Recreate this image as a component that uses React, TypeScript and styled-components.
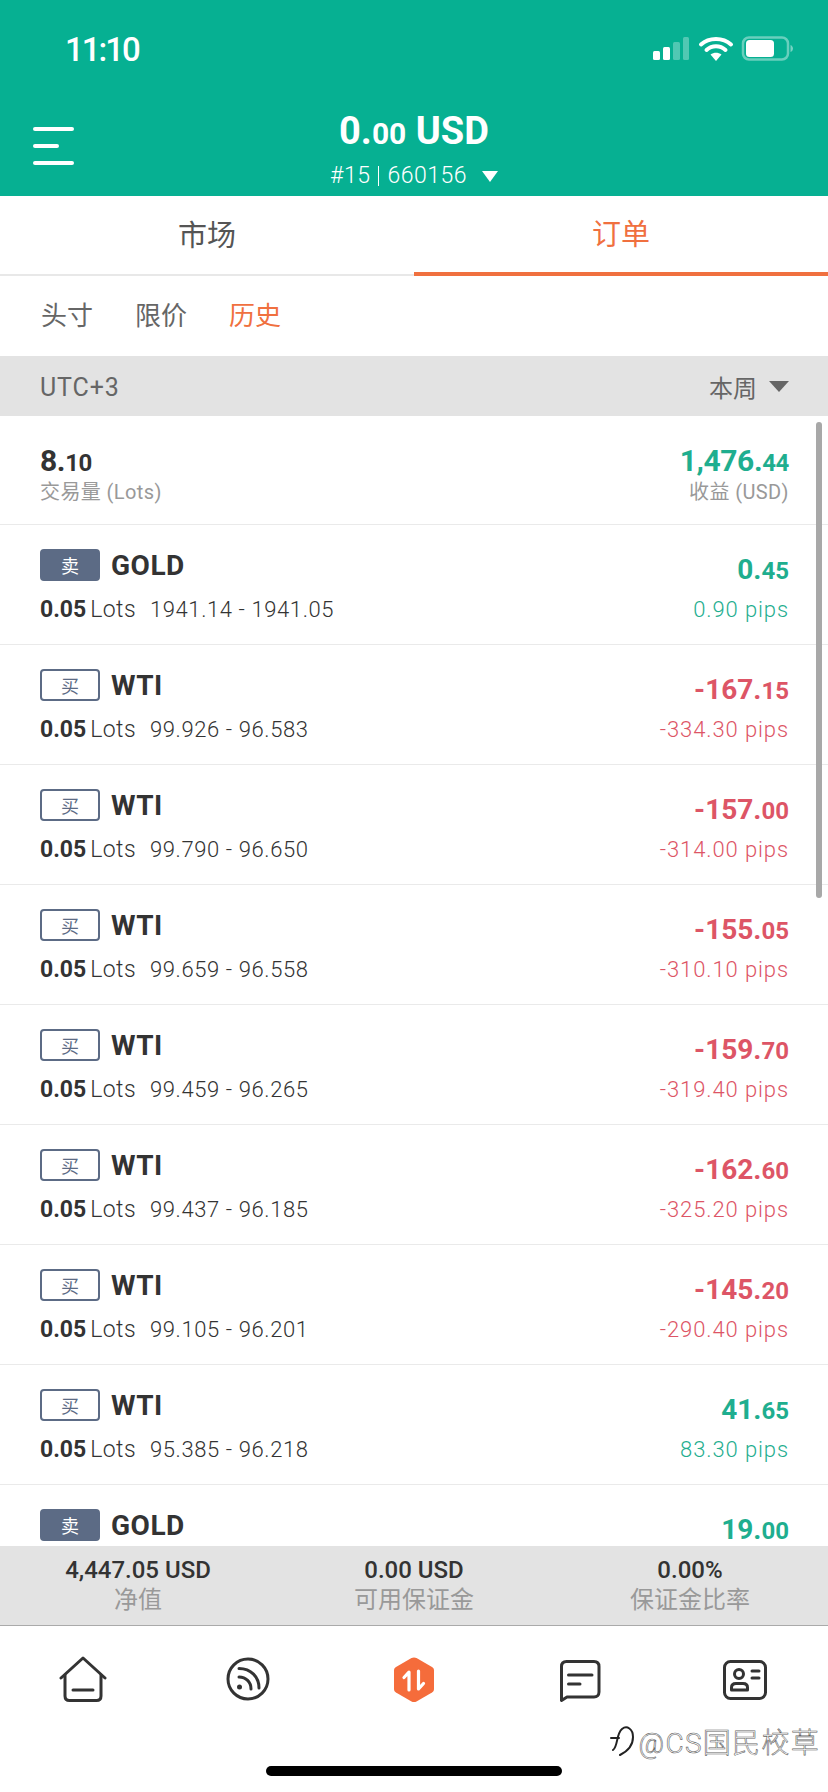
import React from 'react';
import styled, { createGlobalStyle } from 'styled-components';

const GlobalStyle = createGlobalStyle`
  html, body {
    margin: 0;
    padding: 0;
    background: #fff;
  }
  * {
    box-sizing: border-box;
  }
`;

const FONT = `Roboto, "Noto Sans CJK SC", sans-serif`;
const GREEN = '#1fae8f';
const RED = '#dd5566';
const ORANGE = '#f0703f';

type Order = {
  side: 'sell' | 'buy';
  symbol: string;
  range?: string;
  whole: string;
  cents: string;
  pips?: string;
};

// the last row is cut by the footer, only its top line shows
const ORDERS: Order[] = [
  { side: 'sell', symbol: 'GOLD', range: '1941.14 - 1941.05', whole: '0.', cents: '45', pips: '0.90 pips' },
  { side: 'buy', symbol: 'WTI', range: '99.926 - 96.583', whole: '-167.', cents: '15', pips: '-334.30 pips' },
  { side: 'buy', symbol: 'WTI', range: '99.790 - 96.650', whole: '-157.', cents: '00', pips: '-314.00 pips' },
  { side: 'buy', symbol: 'WTI', range: '99.659 - 96.558', whole: '-155.', cents: '05', pips: '-310.10 pips' },
  { side: 'buy', symbol: 'WTI', range: '99.459 - 96.265', whole: '-159.', cents: '70', pips: '-319.40 pips' },
  { side: 'buy', symbol: 'WTI', range: '99.437 - 96.185', whole: '-162.', cents: '60', pips: '-325.20 pips' },
  { side: 'buy', symbol: 'WTI', range: '99.105 - 96.201', whole: '-145.', cents: '20', pips: '-290.40 pips' },
  { side: 'buy', symbol: 'WTI', range: '95.385 - 96.218', whole: '41.', cents: '65', pips: '83.30 pips' },
  { side: 'sell', symbol: 'GOLD', whole: '19.', cents: '00' },
];

function StatusIcons() {
  return (
    <svg width="144" height="28" viewBox="0 0 144 28" fill="none">
      <rect x="4" y="16" width="7" height="9" rx="1.5" fill="#fff" />
      <rect x="14" y="12" width="7" height="13" rx="1.5" fill="#fff" />
      <rect x="24" y="7" width="7" height="18" rx="1.5" fill="#fff" opacity="0.3" />
      <rect x="34" y="2" width="6" height="23" rx="1.5" fill="#fff" opacity="0.3" />
      <path d="M52 9.5C60 2 74 2 82 9.5" stroke="#fff" strokeWidth="4" strokeLinecap="round" />
      <path d="M57.5 15C63 10 71 10 76.5 15" stroke="#fff" strokeWidth="4" strokeLinecap="round" />
      <path d="M61.5 19.5L67 26L72.5 19.5C69 17 65 17 61.5 19.5Z" fill="#fff" />
      <rect x="94" y="2.5" width="45" height="22" rx="6" stroke="#fff" strokeOpacity="0.4" strokeWidth="2.5" />
      <rect x="97" y="5" width="28" height="17" rx="3.5" fill="#fff" />
      <path d="M141.5 10C143 10.500 144 12 144 13.500C144 15 143 16.500 141.500 17Z" fill="#fff" fillOpacity="0.45" />
    </svg>
  );
}

function HomeIcon() {
  return (
    <NavSvg>
      <path d="M2 22L24 2L46 22" />
      <path d="M6 19V40C6 43 7.500 44.500 10.500 44.500H37.500C40.500 44.500 42 43 42 40V19" />
      <path d="M14 34H34" />
    </NavSvg>
  );
}

function FeedIcon() {
  return (
    <NavSvg>
      <circle cx="24" cy="23" r="20" />
      <path d="M15 21C22 21 27 26 27 33" />
      <path d="M15 12.500C27 12.500 35 21 35 32" />
      <circle cx="15.500" cy="31" r="2.500" fill="#333" stroke="none" />
    </NavSvg>
  );
}

function OrdersIcon() {
  return (
    <svg width="48" height="48" viewBox="0 0 48 48" fill="none">
      <path
        d="M21.500 2L6 11C4.500 12 4 13 4 14.500V33C4 34.500 4.500 35.500 6 36.500L21.500 45.500C23 46.300 25 46.300 26.500 45.500L42 36.500C43.500 35.500 44 34.500 44 33V14.500C44 13 43.500 12 42 11L26.500 2C25 1.200 23 1.200 21.500 2Z"
        fill="#f56c3b"
      />
      <path
        d="M19 34V16L14 21.500M28.500 15V33L33.500 27.500"
        stroke="#fff"
        strokeWidth="3.200"
        strokeLinecap="round"
        strokeLinejoin="round"
      />
    </svg>
  );
}

function MessageIcon() {
  return (
    <NavSvg>
      <path d="M5.500 44.500V10.500C5.500 7 7.500 5.500 10.500 5.500H38C41 5.500 43 7 43 10.500V36C43 39 41 41 38 41H11L5.500 44.500Z" />
      <path d="M12.500 19H36" />
      <path d="M12.500 28H24" />
    </NavSvg>
  );
}

function ProfileIcon() {
  return (
    <NavSvg>
      <rect x="3.500" y="5.500" width="41" height="37" rx="6" />
      <circle cx="18" cy="18" r="4.500" />
      <path d="M10.500 34V31.500C10.500 28.500 12.500 27.500 15 27.500H22C24.500 27.500 26.500 28.500 26.500 31.500V34Z" />
      <path d="M31 15H38" />
      <path d="M31 22H38" />
    </NavSvg>
  );
}

function WatermarkLogo() {
  return (
    <svg width="24" height="32" viewBox="0 0 24 32" fill="none">
      <path
        d="M1 13H9M3 25C8 22 6 9 12 4C17 0 23 4 23 12C23 20 18 26 10 30"
        stroke="#222"
        strokeWidth="2"
        strokeLinecap="round"
      />
    </svg>
  );
}

function Money({ whole, cents }: { whole: string; cents: string }) {
  return (
    <>
      {whole}
      <Cents>{cents}</Cents>
    </>
  );
}

export default function App() {
  return (
    <Root>
      <GlobalStyle />
      <Header>
        <StatusBar>
          <Clock>11:10</Clock>
          <StatusIcons />
        </StatusBar>
        <AccountRow>
          <Hamburger>
            <HamburgerLine />
            <HamburgerLine $short />
            <HamburgerLine />
          </Hamburger>
          <Account>
            <Balance>
              0.<BalanceCents>00</BalanceCents> USD
            </Balance>
            <AccountId>
              #15
              <AccountDivider />
              660156
              <AccountCaret />
            </AccountId>
          </Account>
        </AccountRow>
      </Header>

      <MainTabs>
        <MainTab>市场</MainTab>
        <MainTab $active>订单</MainTab>
      </MainTabs>

      <SubTabs>
        <SubTab>头寸</SubTab>
        <SubTab>限价</SubTab>
        <SubTab $active>历史</SubTab>
      </SubTabs>

      <FilterBar>
        <Timezone>UTC+3</Timezone>
        <PeriodPicker>
          本周
          <PeriodCaret />
        </PeriodPicker>
      </FilterBar>

      <ListArea>
        <ScrollThumb />
        <SummaryRow>
          <div>
            <SummaryValue>
              8.<Cents>10</Cents>
            </SummaryValue>
            <SummaryLabel>交易量 (Lots)</SummaryLabel>
          </div>
          <SummaryRight>
            <SummaryValue $color={GREEN}>
              1,476.<Cents>44</Cents>
            </SummaryValue>
            <SummaryLabel>收益 (USD)</SummaryLabel>
          </SummaryRight>
        </SummaryRow>

        {ORDERS.map((order, i) => {
          const color = order.whole.startsWith('-') ? RED : GREEN;
          return (
            <OrderRow key={i}>
              <OrderLeft>
                <OrderTitle>
                  <SideBadge $side={order.side}>{order.side === 'sell' ? '卖' : '买'}</SideBadge>
                  <Symbol>{order.symbol}</Symbol>
                </OrderTitle>
                {order.range && (
                  <OrderMeta>
                    <LotSize>0.05</LotSize>
                    <LotUnit>Lots</LotUnit>
                    <PriceRange>{order.range}</PriceRange>
                  </OrderMeta>
                )}
              </OrderLeft>
              <OrderRight>
                <Profit $color={color}>
                  <Money whole={order.whole} cents={order.cents} />
                </Profit>
                {order.pips && <Pips $color={color}>{order.pips}</Pips>}
              </OrderRight>
            </OrderRow>
          );
        })}
      </ListArea>

      <AccountStats>
        <Stat>
          <StatValue>4,447.05 USD</StatValue>
          <StatLabel>净值</StatLabel>
        </Stat>
        <Stat>
          <StatValue>0.00 USD</StatValue>
          <StatLabel>可用保证金</StatLabel>
        </Stat>
        <Stat>
          <StatValue>0.00%</StatValue>
          <StatLabel>保证金比率</StatLabel>
        </Stat>
      </AccountStats>

      <BottomNav>
        <NavItem><HomeIcon /></NavItem>
        <NavItem><FeedIcon /></NavItem>
        <NavItem><OrdersIcon /></NavItem>
        <NavItem><MessageIcon /></NavItem>
        <NavItem><ProfileIcon /></NavItem>
        <HomeIndicator />
        <Watermark>
          <WatermarkLogo />
          <WatermarkText>@CS国民校草</WatermarkText>
        </Watermark>
      </BottomNav>
    </Root>
  );
}

const Root = styled.div`
  display: flex;
  flex-direction: column;
  width: 828px;
  height: 1792px;
  overflow: hidden;
  background: #fff;
  color: #333;
  font-family: ${FONT};
`;

const Header = styled.header`
  flex: none;
  height: 196px;
  background: #06b092;
  color: #fff;
`;

const StatusBar = styled.div`
  display: flex;
  align-items: center;
  justify-content: space-between;
  height: 100px;
  padding: 0 35px 2px 65px;
`;

const Clock = styled.div`
  font-size: 33px;
  font-weight: 500;
  letter-spacing: -2px;
`;

const AccountRow = styled.div`
  display: grid;
  grid-template-columns: 1fr auto 1fr;
  align-items: start;
  padding: 0 33px;
`;

const Hamburger = styled.div`
  display: flex;
  flex-direction: column;
  gap: 13px;
  padding-top: 27px;
`;

const HamburgerLine = styled.div<{ $short?: boolean }>`
  width: ${(p) => (p.$short ? '26px' : '41px')};
  height: 4px;
  border-radius: 2px;
  background: #fff;
`;

const Account = styled.div`
  display: flex;
  flex-direction: column;
  align-items: center;
`;

const Balance = styled.div`
  font-size: 38px;
  font-weight: 700;
  line-height: 44px;
  margin-top: 9px;
  white-space: nowrap;
`;

const BalanceCents = styled.span`
  font-size: 30px;
`;

const AccountId = styled.div`
  display: flex;
  align-items: center;
  margin-top: 6px;
  font-size: 23px;
  font-weight: 300;
  line-height: 28px;
  letter-spacing: 0.5px;
  white-space: nowrap;
`;

const AccountDivider = styled.span`
  width: 1px;
  height: 20px;
  margin: 0 8px;
  background: #fff;
`;

const AccountCaret = styled.span`
  width: 0;
  height: 0;
  margin-left: 15px;
  border-left: 8px solid transparent;
  border-right: 8px solid transparent;
  border-top: 11px solid #fff;
`;

const MainTabs = styled.nav`
  flex: none;
  display: grid;
  grid-template-columns: 1fr 1fr;
  height: 80px;
`;

const MainTab = styled.div<{ $active?: boolean }>`
  display: flex;
  align-items: center;
  justify-content: center;
  padding-bottom: 4px;
  border-bottom: ${(p) => (p.$active ? `4px solid ${ORANGE}` : '2px solid #e8e8e8')};
  color: ${(p) => (p.$active ? ORANGE : '#555')};
  font-size: 29px;
`;

const SubTabs = styled.div`
  flex: none;
  display: flex;
  align-items: center;
  gap: 42px;
  height: 80px;
  padding: 0 0 5px 41px;
`;

const SubTab = styled.div<{ $active?: boolean }>`
  color: ${(p) => (p.$active ? ORANGE : '#666')};
  font-size: 26px;
`;

const FilterBar = styled.div`
  flex: none;
  display: flex;
  align-items: center;
  justify-content: space-between;
  height: 60px;
  padding: 0 39px 0 40px;
  background: #e3e3e3;
  color: #666;
  font-size: 24px;
`;

const Timezone = styled.span`
  padding-top: 2px;
  font-size: 25px;
  letter-spacing: 0.9px;
`;

const PeriodPicker = styled.div`
  display: flex;
  align-items: center;
  gap: 12px;
`;

const PeriodCaret = styled.span`
  width: 0;
  height: 0;
  border-left: 10px solid transparent;
  border-right: 10px solid transparent;
  border-top: 11px solid #666;
`;

const ListArea = styled.div`
  position: relative;
  flex: 1;
  min-height: 0;
  overflow: hidden;
`;

const ScrollThumb = styled.div`
  position: absolute;
  top: 6px;
  right: 6px;
  width: 6px;
  height: 476px;
  border-radius: 3px;
  background: #a8a8a8;
`;

const SummaryRow = styled.div`
  display: flex;
  justify-content: space-between;
  height: 109px;
  padding: 27px 39px 0 40px;
  border-bottom: 1px solid #eaeaea;
`;

const SummaryRight = styled.div`
  text-align: right;
`;

const SummaryValue = styled.div<{ $color?: string }>`
  color: ${(p) => p.$color || '#333'};
  font-size: 30px;
  font-weight: 700;
  line-height: 36px;
  letter-spacing: -0.4px;
`;

const Cents = styled.span`
  font-size: 24px;
`;

const SummaryLabel = styled.div`
  color: #999;
  font-size: 20px;
  line-height: 22px;
  letter-spacing: 0.4px;
`;

const OrderRow = styled.div`
  display: flex;
  justify-content: space-between;
  height: 120px;
  padding: 24px 39px 0 40px;
  border-bottom: 1px solid #eaeaea;
`;

const OrderLeft = styled.div`
  display: flex;
  flex-direction: column;
  gap: 12px;
`;

const OrderTitle = styled.div`
  display: flex;
  align-items: center;
  gap: 11px;
  height: 32px;
`;

const SideBadge = styled.span<{ $side: 'sell' | 'buy' }>`
  display: flex;
  align-items: center;
  justify-content: center;
  width: 60px;
  height: 32px;
  border: 2px solid #5c6b85;
  border-radius: 4px;
  background: ${(p) => (p.$side === 'sell' ? '#5c6b85' : '#fff')};
  color: ${(p) => (p.$side === 'sell' ? '#fff' : '#5c6b85')};
  font-size: 18px;
`;

const Symbol = styled.span`
  color: #333;
  font-size: 28px;
  font-weight: 700;
  letter-spacing: 0.5px;
`;

const OrderMeta = styled.div`
  display: flex;
  align-items: baseline;
  color: #333;
  line-height: 34px;
  white-space: nowrap;
`;

const LotSize = styled.span`
  font-size: 23px;
  font-weight: 700;
`;

const LotUnit = styled.span`
  margin-left: 4px;
  font-size: 23px;
  font-weight: 300;
  letter-spacing: 0.4px;
`;

const PriceRange = styled.span`
  margin-left: 14px;
  font-size: 22px;
  font-weight: 300;
  letter-spacing: 0.6px;
`;

const OrderRight = styled.div`
  text-align: right;
`;

const Profit = styled.div<{ $color: string }>`
  margin-top: 3px;
  color: ${(p) => p.$color};
  font-size: 28px;
  font-weight: 700;
  line-height: 36px;
`;

const Pips = styled.div<{ $color: string }>`
  margin-top: 4px;
  color: ${(p) => p.$color};
  font-size: 22px;
  font-weight: 300;
  line-height: 34px;
  letter-spacing: 0.9px;
`;

const AccountStats = styled.div`
  flex: none;
  display: grid;
  grid-template-columns: repeat(3, 1fr);
  height: 80px;
  padding-top: 9px;
  background: #e3e3e3;
  border-bottom: 1px solid #aaa;
`;

const Stat = styled.div`
  text-align: center;
`;

const StatValue = styled.div`
  color: #333;
  font-size: 24px;
  font-weight: 500;
  line-height: 30px;
`;

const StatLabel = styled.div`
  color: #999;
  font-size: 24px;
  line-height: 30px;
`;

const BottomNav = styled.nav`
  position: relative;
  flex: none;
  display: grid;
  grid-template-columns: repeat(5, 1fr);
  align-items: start;
  height: 166px;
  padding-top: 30px;
`;

const NavItem = styled.div`
  display: flex;
  justify-content: center;
`;

const NavSvg = styled.svg.attrs({
  width: 48,
  height: 48,
  viewBox: '0 0 48 48',
  fill: 'none',
})`
  stroke: #333;
  stroke-width: 3px;
  stroke-linecap: round;
  stroke-linejoin: round;
`;

const HomeIndicator = styled.div`
  position: absolute;
  left: 266px;
  bottom: 16px;
  width: 296px;
  height: 10px;
  border-radius: 5px;
  background: #000;
`;

const Watermark = styled.div`
  position: absolute;
  right: 8px;
  bottom: 31px;
  display: flex;
  align-items: center;
  gap: 5px;
`;

const WatermarkText = styled.span`
  color: #fff;
  font-size: 28px;
  font-weight: 300;
  letter-spacing: 1.3px;
  -webkit-text-stroke: 0.6px #666;
  white-space: nowrap;
`;
